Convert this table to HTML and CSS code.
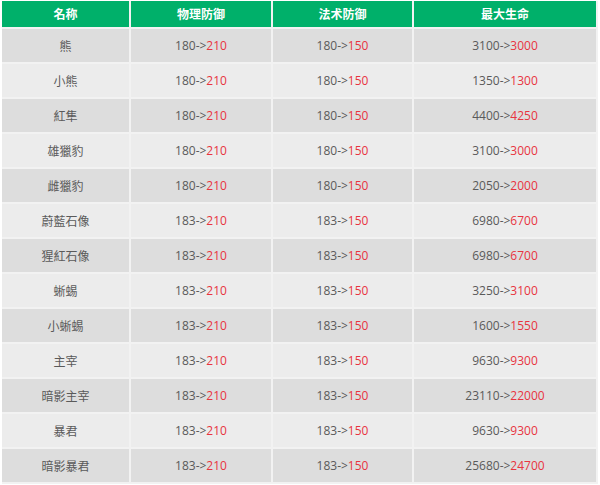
FILE: index.html
```html
<!DOCTYPE html>
<html lang="zh-Hant">
<head>
<meta charset="utf-8">
<title>屬性調整</title>
<link rel="stylesheet" href="styles.css">
</head>
<body>
<table class="stats">
  <colgroup>
    <col class="c-name">
    <col class="c-def">
    <col class="c-mdef">
    <col class="c-hp">
  </colgroup>
  <thead>
    <tr><th>名称</th><th>物理防御</th><th>法术防御</th><th>最大生命</th></tr>
  </thead>
  <tbody>
    <tr><td>熊</td><td>180-&gt;<span class="new">210</span></td><td>180-&gt;<span class="new">150</span></td><td>3100-&gt;<span class="new">3000</span></td></tr>
    <tr><td>小熊</td><td>180-&gt;<span class="new">210</span></td><td>180-&gt;<span class="new">150</span></td><td>1350-&gt;<span class="new">1300</span></td></tr>
    <tr><td>紅隼</td><td>180-&gt;<span class="new">210</span></td><td>180-&gt;<span class="new">150</span></td><td>4400-&gt;<span class="new">4250</span></td></tr>
    <tr><td>雄獵豹</td><td>180-&gt;<span class="new">210</span></td><td>180-&gt;<span class="new">150</span></td><td>3100-&gt;<span class="new">3000</span></td></tr>
    <tr><td>雌獵豹</td><td>180-&gt;<span class="new">210</span></td><td>180-&gt;<span class="new">150</span></td><td>2050-&gt;<span class="new">2000</span></td></tr>
    <tr><td>蔚藍石像</td><td>183-&gt;<span class="new">210</span></td><td>183-&gt;<span class="new">150</span></td><td>6980-&gt;<span class="new">6700</span></td></tr>
    <tr><td>猩紅石像</td><td>183-&gt;<span class="new">210</span></td><td>183-&gt;<span class="new">150</span></td><td>6980-&gt;<span class="new">6700</span></td></tr>
    <tr><td>蜥蜴</td><td>183-&gt;<span class="new">210</span></td><td>183-&gt;<span class="new">150</span></td><td>3250-&gt;<span class="new">3100</span></td></tr>
    <tr><td>小蜥蜴</td><td>183-&gt;<span class="new">210</span></td><td>183-&gt;<span class="new">150</span></td><td>1600-&gt;<span class="new">1550</span></td></tr>
    <tr><td>主宰</td><td>183-&gt;<span class="new">210</span></td><td>183-&gt;<span class="new">150</span></td><td>9630-&gt;<span class="new">9300</span></td></tr>
    <tr><td>暗影主宰</td><td>183-&gt;<span class="new">210</span></td><td>183-&gt;<span class="new">150</span></td><td>23110-&gt;<span class="new">22000</span></td></tr>
    <tr><td>暴君</td><td>183-&gt;<span class="new">210</span></td><td>183-&gt;<span class="new">150</span></td><td>9630-&gt;<span class="new">9300</span></td></tr>
    <tr><td>暗影暴君</td><td>183-&gt;<span class="new">210</span></td><td>183-&gt;<span class="new">150</span></td><td>25680-&gt;<span class="new">24700</span></td></tr>
  </tbody>
</table>
</body>
</html>
```

FILE: styles.css
```css
html, body {
  margin: 0;
  padding: 0;
  background: #ffffff;
}
body {
  padding: 1px 2px;
  font-family: "Open Sans", "Noto Sans CJK TC", "Noto Sans CJK SC", sans-serif;
  font-size: 12px;
  color: #5a5a5a;
}
.stats {
  width: 595px;
  table-layout: fixed;
  border-collapse: collapse;
}
.c-name { width: 128px; }
.c-def { width: 142px; }
.c-mdef { width: 141px; }
.c-hp { width: 184px; }
.stats th,
.stats td {
  border: 2px solid #f2f2f2;
  text-align: center;
  padding: 0;
  white-space: nowrap;
}
.stats th {
  background: #00b06a;
  color: #ffffff;
  font-weight: bold;
  height: 26px;
  font-size: 12px;
}
.stats td {
  height: 33px;
}
.stats tbody tr:nth-child(odd) td { background: #dddddd; }
.stats tbody tr:nth-child(even) td { background: #ececec; }
.stats .new { color: #e8343f; }
.stats tr > :first-child { border-left: none; }
.stats thead th { border-top: none; }
```
